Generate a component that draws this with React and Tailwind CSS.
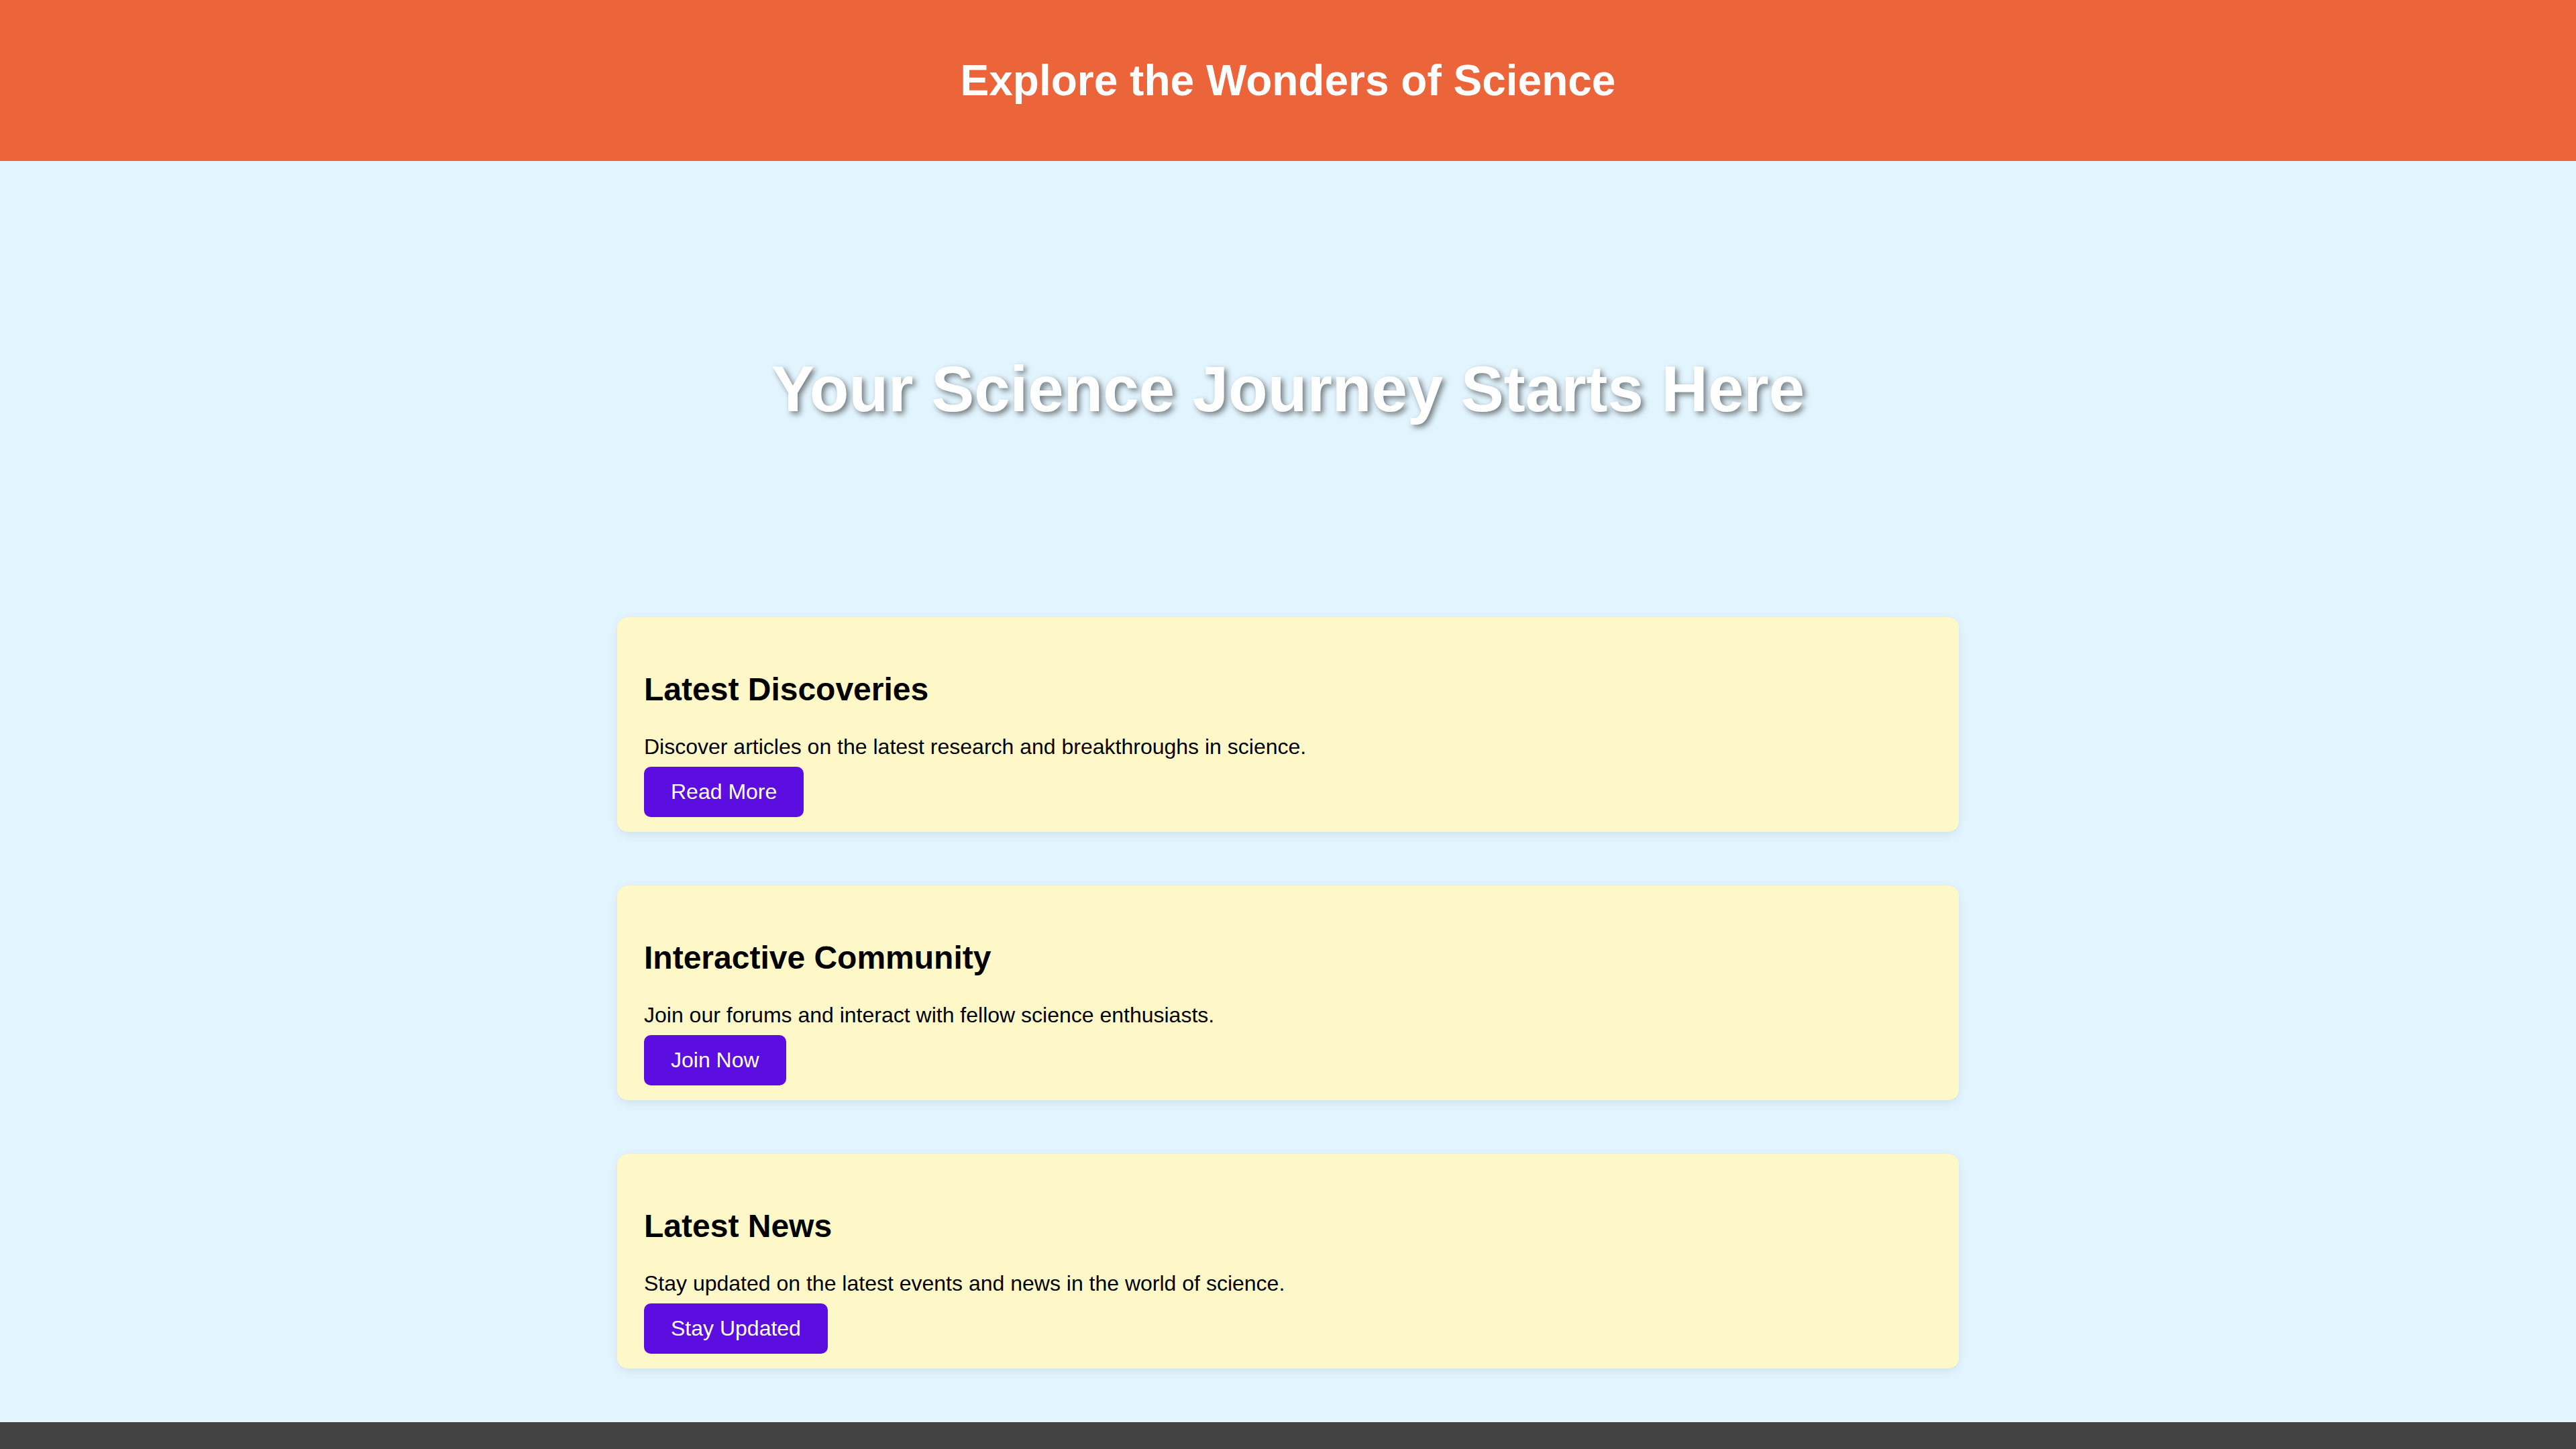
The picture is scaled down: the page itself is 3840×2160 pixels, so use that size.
import React from 'react'

const cards = [
  {
    title: 'Latest Discoveries',
    text: 'Discover articles on the latest research and breakthroughs in science.',
    button: 'Read More',
  },
  {
    title: 'Interactive Community',
    text: 'Join our forums and interact with fellow science enthusiasts.',
    button: 'Join Now',
  },
  {
    title: 'Latest News',
    text: 'Stay updated on the latest events and news in the world of science.',
    button: 'Stay Updated',
  },
]

function Card({ title, text, button }) {
  return (
    <section className="w-[2000px] rounded-[16px] bg-[#fef8c8] px-[40px] pt-[40px] pb-[22px] shadow-[0_4px_14px_rgba(0,0,0,0.08)]">
      <h2 className="my-[40px] text-[48px] font-bold leading-[55px] text-black">{title}</h2>
      <p className="mt-0 mb-[11px] text-[32px] leading-[37px] text-black">{text}</p>
      <button className="rounded-[10px] bg-[#5c0de0] px-[40px] py-[19px] text-[32px] leading-[37px] text-white">
        {button}
      </button>
    </section>
  )
}

export default function App() {
  return (
    <div className="min-h-screen bg-[#e2f4fd] font-['Liberation_Sans',Arial,sans-serif]">
      {/* ヘッダー */}
      <header className="flex h-[240px] items-center justify-center bg-[#ec6439]">
        <h1 className="text-[64px] font-bold leading-[74px] text-white">Explore the Wonders of Science</h1>
      </header>

      {/* ヒーロー */}
      <div className="flex h-[680px] items-center justify-center">
        <h2 className="text-[96px] font-bold leading-[110px] text-white [text-shadow:4px_4px_8px_rgba(0,0,0,0.5)]">
          Your Science Journey Starts Here
        </h2>
      </div>

      {/* カード */}
      <main className="flex flex-col items-center gap-[80px] pb-[80px]">
        {cards.map((c) => (
          <Card key={c.title} {...c} />
        ))}
      </main>

      <footer className="h-[160px] bg-[#424242]" />
    </div>
  )
}
